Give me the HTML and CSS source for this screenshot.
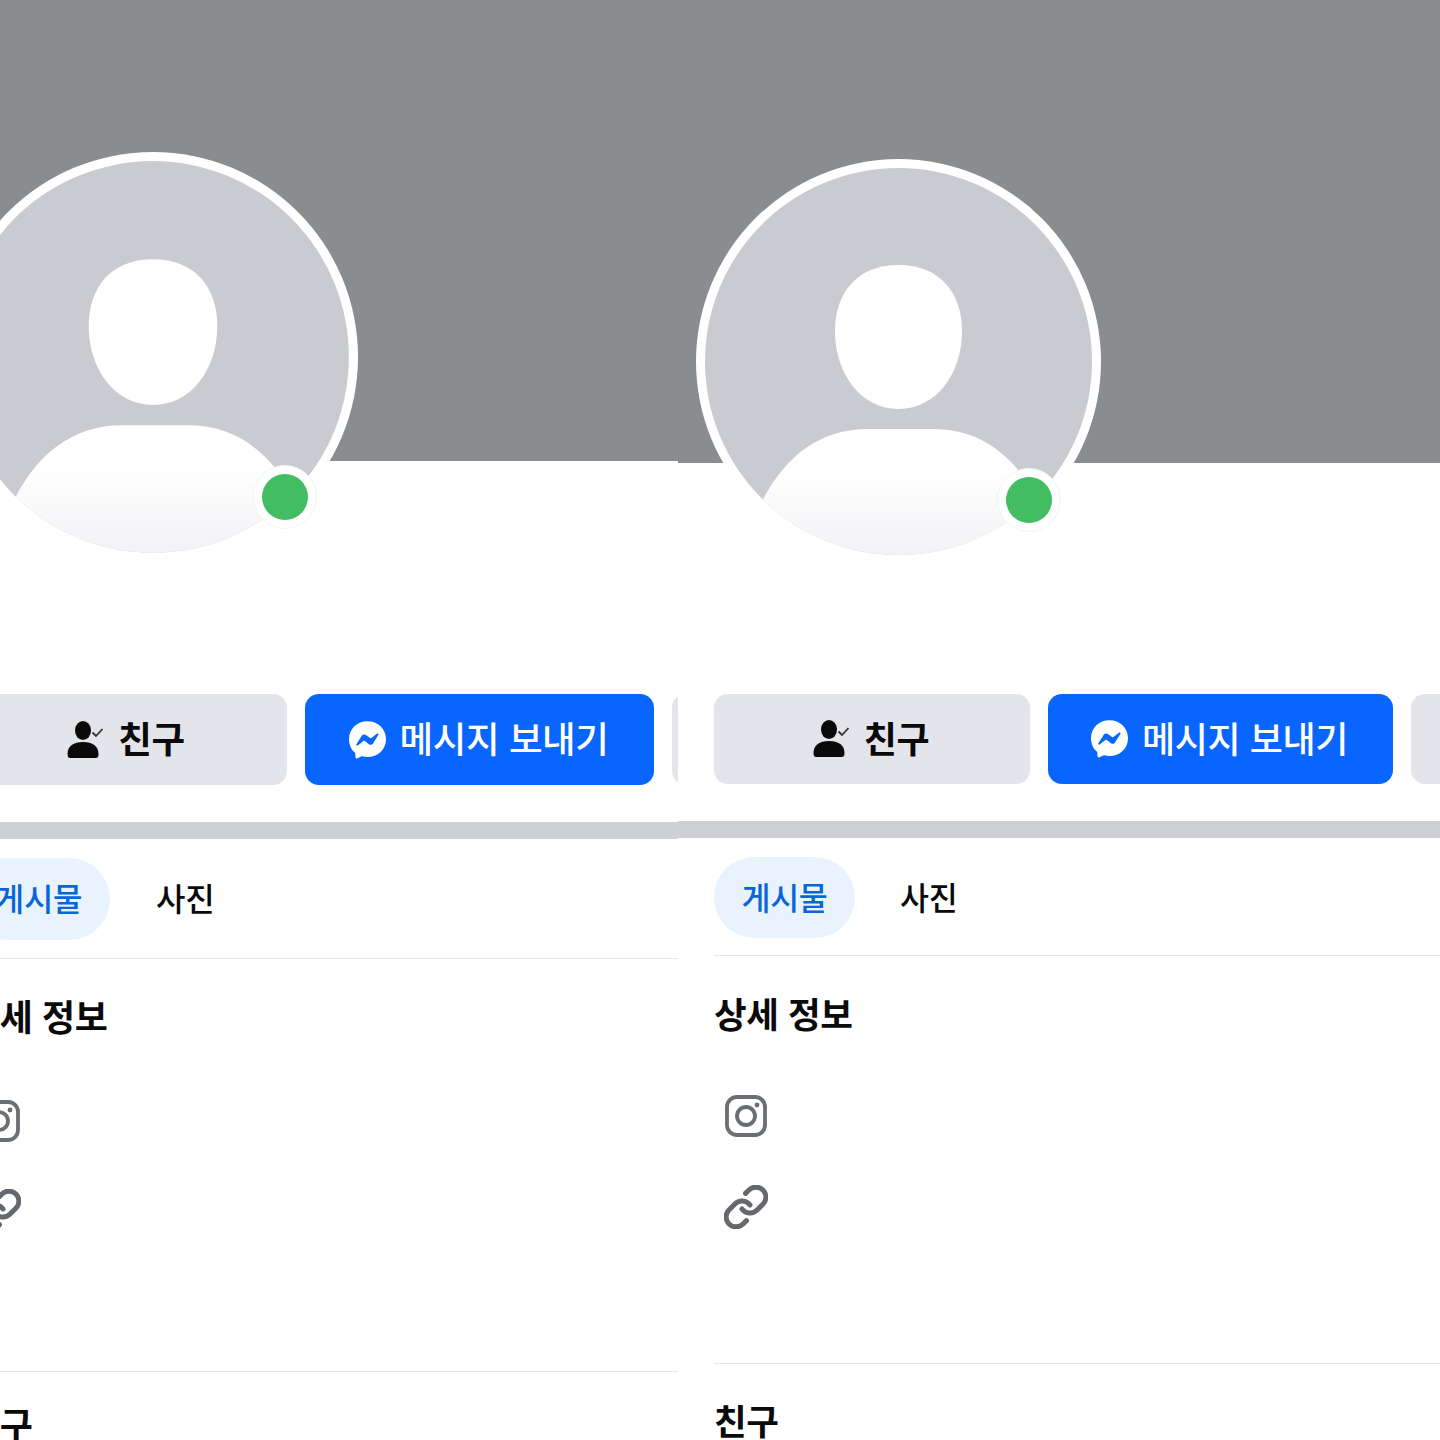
FILE: index.html
```html
<!DOCTYPE html>
<html lang="ko">
<head>
<meta charset="utf-8">
<title>프로필</title>
<link rel="stylesheet" href="styles.css">
</head>
<body>
<svg class="defs" width="0" height="0" aria-hidden="true">
  <defs>
    <linearGradient id="bodyFade" x1="0" y1="0" x2="0" y2="1">
      <stop offset="0.3" stop-color="#ffffff"/>
      <stop offset="1" stop-color="#f0f1f4"/>
    </linearGradient>
    <clipPath id="avatarClip"><circle cx="202.5" cy="202.5" r="193.5"/></clipPath>
    <symbol id="avatarArt" viewBox="0 0 405 405">
      <circle cx="202.5" cy="202.5" r="202.5" fill="#ffffff"/>
      <circle cx="202.5" cy="202.5" r="193.5" fill="#c9cbd1"/>
      <path d="M202.5 106C245 106 266 135 266 172C266 215 240 250 202.5 250C165 250 139 215 139 172C139 135 160 106 202.5 106Z" fill="#fff"/>
      <path clip-path="url(#avatarClip)" d="M58 405V360C82 300 122 270 172 270H236C282 270 312 292 340 335V405Z" fill="url(#bodyFade)"/>
    </symbol>
    <symbol id="friendIcon" viewBox="0 0 36 38">
      <ellipse cx="15.5" cy="9.5" rx="8" ry="9.5" fill="#0a0a0a"/>
      <path d="M0 33C0 25 6 21 15.500 21S31 25 31 33C31 36 30 37 28 37H3C1 37 0 36 0 33Z" fill="#0a0a0a"/>
      <path d="M25 11.500L28.500 15L35 8" fill="none" stroke="#333" stroke-width="1.800"/>
    </symbol>
    <symbol id="messengerIcon" viewBox="2 2 20 20.300">
      <path d="M12 2C6.400 2 2 6.100 2 11.700c0 2.900 1.200 5.500 3.100 7.200.2.100.3.400.3.600l.1 1.800c0 .6.600 1 1.100.7l2-.9c.2-.1.400-.1.600-.1.900.3 1.800.4 2.800.4 5.600 0 10-4.100 10-9.700S17.600 2 12 2z" fill="#fff"/>
      <path d="M6 14.500l2.900-4.700c.5-.7 1.500-.9 2.200-.4l2.300 1.700c.2.200.5.200.7 0l3.100-2.400c.4-.3 1 .2.700.6l-2.900 4.700c-.5.7-1.500.9-2.200.4l-2.300-1.700c-.2-.2-.5-.2-.7 0l-3.100 2.400c-.4.3-1-.2-.7-.6z" fill="#0866ff"/>
    </symbol>
    <symbol id="instaIcon" viewBox="0 0 44 44">
      <rect x="3" y="3" width="38" height="38" rx="10" fill="none" stroke="#6b6e72" stroke-width="3.800"/>
      <circle cx="22" cy="22" r="9" fill="none" stroke="#6b6e72" stroke-width="3.800"/>
      <circle cx="33" cy="11" r="2.400" fill="#6b6e72"/>
    </symbol>
    <symbol id="linkIcon" viewBox="1 1 22 22">
      <path d="M10 13a5 5 0 0 0 7.540.540l3-3a5 5 0 0 0-7.070-7.070l-1.720 1.710" fill="none" stroke="#65686c" stroke-width="2.500" stroke-linecap="round"/>
      <path d="M14 11a5 5 0 0 0-7.540-.540l-3 3a5 5 0 0 0 7.070 7.070l1.710-1.710" fill="none" stroke="#65686c" stroke-width="2.500" stroke-linecap="round"/>
    </symbol>
  </defs>
</svg>

<main class="stage">
  <section class="panel panel-left">
    <div class="cover"></div>
    <div class="avatar">
      <svg class="avatar-art"><use href="#avatarArt"/></svg>
      <span class="presence"><span class="presence-dot"></span></span>
    </div>
    <div class="actions">
      <button class="btn btn-friend"><svg class="btn-icon"><use href="#friendIcon"/></svg><span class="btn-label">친구</span></button>
      <button class="btn btn-message"><svg class="btn-icon"><use href="#messengerIcon"/></svg><span class="btn-label">메시지 보내기</span></button>
      <button class="btn btn-more"></button>
    </div>
    <div class="bar"></div>
    <div class="content">
      <nav class="tabs"><span class="tab tab-active">게시물</span><span class="tab">사진</span></nav>
      <hr class="rule rule-tabs">
      <h2 class="heading heading-details">상세 정보</h2>
      <svg class="line-icon icon-insta"><use href="#instaIcon"/></svg>
      <svg class="line-icon icon-link"><use href="#linkIcon"/></svg>
      <hr class="rule rule-details">
      <h2 class="heading heading-friends">친구</h2>
    </div>
  </section>

  <section class="panel panel-right">
    <div class="cover"></div>
    <div class="avatar">
      <svg class="avatar-art"><use href="#avatarArt"/></svg>
      <span class="presence"><span class="presence-dot"></span></span>
    </div>
    <div class="actions">
      <button class="btn btn-friend"><svg class="btn-icon"><use href="#friendIcon"/></svg><span class="btn-label">친구</span></button>
      <button class="btn btn-message"><svg class="btn-icon"><use href="#messengerIcon"/></svg><span class="btn-label">메시지 보내기</span></button>
      <button class="btn btn-more"></button>
    </div>
    <div class="bar"></div>
    <div class="content">
      <nav class="tabs"><span class="tab tab-active">게시물</span><span class="tab">사진</span></nav>
      <hr class="rule rule-tabs">
      <h2 class="heading heading-details">상세 정보</h2>
      <svg class="line-icon icon-insta"><use href="#instaIcon"/></svg>
      <svg class="line-icon icon-link"><use href="#linkIcon"/></svg>
      <hr class="rule rule-details">
      <h2 class="heading heading-friends">친구</h2>
    </div>
  </section>
</main>
</body>
</html>
```

FILE: styles.css
```css
* { box-sizing: border-box; }

html, body {
  margin: 0;
  padding: 0;
  background: #fff;
}

body {
  width: 1440px;
  height: 1440px;
  overflow: hidden;
  font-family: "Noto Sans CJK KR", "Noto Sans", sans-serif;
}

.defs { position: absolute; }

.stage {
  display: flex;
  width: 1440px;
  height: 1440px;
}

.panel {
  position: relative;
  flex: none;
  height: 1440px;
  overflow: hidden;
  background: #fff;
}

.panel-left {
  width: 678px;
  --inset: -33px;
  --cover: 461px;
  --av-left: -52px;
  --av-top: 152px;
  --av-size: 410px;
  --dot-x: 337px;
  --dot-y: 345px;
  --ring: 64px;
  --dot: 46px;
  --actions-top: 233px;
  --btn-h: 91px;
  --friend-w: 320px;
  --msg-w: 349px;
  --btn-gap: 18px;
  --btn-font: 36.500px;
  --pill-h: 82px;
  --pill-w: 143px;
  --tab-font: 32px;
  --tab-gap: 46px;
  --rule-tabs: 18px;
  --head-top: 33px;
  --head-font: 36px;
  --insta-top: 57px;
  --link-top: 46px;
  --rule-details: 138px;
  --friends-top: 28px;
  --icon: 44px;
}

.panel-right {
  width: 762px;
  --inset: 36px;
  --cover: 463px;
  --av-left: 18px;
  --av-top: 159px;
  --av-size: 405px;
  --dot-x: 333px;
  --dot-y: 341px;
  --ring: 64px;
  --dot: 46px;
  --actions-top: 231px;
  --btn-h: 90px;
  --friend-w: 316px;
  --msg-w: 345px;
  --btn-gap: 18px;
  --btn-font: 36px;
  --pill-h: 81px;
  --pill-w: 141px;
  --tab-font: 31.500px;
  --tab-gap: 45px;
  --rule-tabs: 17px;
  --head-top: 33px;
  --head-font: 35.500px;
  --insta-top: 55px;
  --link-top: 47px;
  --rule-details: 134px;
  --friends-top: 32px;
  --icon: 44px;
}

.cover {
  height: var(--cover);
  background: #898d8f;
}

.avatar {
  position: absolute;
  left: var(--av-left);
  top: var(--av-top);
  width: var(--av-size);
  height: var(--av-size);
}

.avatar-art {
  display: block;
  width: 100%;
  height: 100%;
}

.presence {
  position: absolute;
  left: var(--dot-x);
  top: var(--dot-y);
  width: var(--ring);
  height: var(--ring);
  transform: translate(-50%, -50%);
  display: flex;
  align-items: center;
  justify-content: center;
  border-radius: 50%;
  background: #fff;
  border: 1px solid #eef7f0;
}

.presence-dot {
  width: var(--dot);
  height: var(--dot);
  border-radius: 50%;
  background: #42bd62;
}

.actions {
  display: flex;
  gap: var(--btn-gap);
  margin-top: var(--actions-top);
  margin-left: var(--inset);
}

.btn {
  flex: none;
  display: flex;
  align-items: center;
  justify-content: center;
  gap: 14px;
  height: var(--btn-h);
  padding: 0 2px 0 0;
  border: 0;
  border-radius: 14px;
  font-family: inherit;
  font-size: var(--btn-font);
  font-weight: 500;
  letter-spacing: -0.4px;
  white-space: nowrap;
}

.btn-label {
  margin-bottom: 4px;
}

.btn-icon {
  flex: none;
  width: 37px;
  height: 38px;
}

.btn-friend {
  width: var(--friend-w);
  background: #e4e5ea;
  color: #0a0a0a;
  font-weight: 600;
}

.btn-message {
  width: var(--msg-w);
  background: #0866ff;
  color: #fff;
}

.btn-more {
  width: 120px;
  background: #e4e5ea;
}

.bar {
  height: 17px;
  margin-top: 37px;
  background: #ced0d4;
}

.content {
  margin-left: var(--inset);
  margin-top: 19px;
}

.tabs {
  display: flex;
  align-items: center;
  gap: var(--tab-gap);
  height: var(--pill-h);
}

.tab {
  padding-bottom: 4px;
  font-size: var(--tab-font);
  font-weight: 500;
  color: #0a0a0a;
  white-space: nowrap;
  letter-spacing: -0.3px;
}

.tab-active {
  display: flex;
  align-items: center;
  justify-content: center;
  width: var(--pill-w);
  height: 100%;
  border-radius: 41px;
  background: #e9f3fe;
  color: #0a66d6;
}

.rule {
  display: block;
  height: 1px;
  margin: 0;
  border: 0;
  background: #e2e4e7;
}

.rule-tabs { margin-top: var(--rule-tabs); }
.rule-details { margin-top: var(--rule-details); }

.heading {
  height: 50px;
  margin: 0;
  font-size: var(--head-font);
  font-weight: 700;
  line-height: 47px;
  letter-spacing: -0.4px;
  color: #0a0a0a;
}

.heading-details { margin-top: var(--head-top); }
.heading-friends { margin-top: var(--friends-top); }

.line-icon {
  display: block;
  width: var(--icon);
  height: var(--icon);
  margin-left: 10px;
}

.icon-insta { margin-top: var(--insta-top); }
.icon-link { margin-top: var(--link-top); }
```
